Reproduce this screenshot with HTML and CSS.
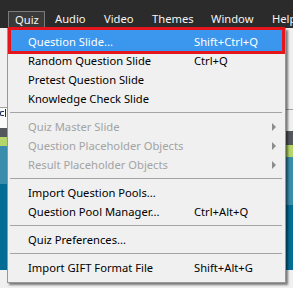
FILE: index.html
```html
<!DOCTYPE html>
<html>
<head>
<meta charset="utf-8">
<link rel="stylesheet" href="styles.css">
</head>
<body>
<div class="screen">
  <div class="menubar">
    <span class="mb-item mb-quiz">Quiz</span>
    <span class="mb-item mb-audio">Audio</span>
    <span class="mb-item mb-video">Video</span>
    <span class="mb-item mb-themes">Themes</span>
    <span class="mb-item mb-window">Window</span>
    <span class="mb-item mb-help">Help</span>
  </div>
  <div class="app">
    <div class="pane pane-left">
      <div class="band b-l1"></div>
      <div class="band b-line"></div>
      <div class="band b-l2"><span class="frag-c"></span><span class="frag-bar"></span></div>
      <div class="band b-l3"></div>
      <div class="band b-l4"></div>
      <div class="band b-l5"></div>
      <div class="band b-l6"></div>
      <div class="band b-l7"></div>
    </div>
    <div class="pane pane-mid"></div>
    <div class="pane pane-right">
      <div class="band b-r1"></div>
      <div class="band b-line"></div>
      <div class="band b-r2"></div>
      <div class="band b-r3"></div>
      <div class="band b-r4"></div>
      <div class="band b-r5"></div>
      <div class="band b-r6"></div>
      <div class="band b-r7"></div>
    </div>
  </div>
  <div class="menu">
    <div class="item hl"><span class="label">Question Slide...</span><span class="key">Shift+Ctrl+Q</span></div>
    <div class="item"><span class="label">Random Question Slide</span><span class="key">Ctrl+Q</span></div>
    <div class="item"><span class="label">Pretest Question Slide</span></div>
    <div class="item"><span class="label">Knowledge Check Slide</span></div>
    <div class="sep"></div>
    <div class="item disabled"><span class="label">Quiz Master Slide</span><span class="arrow"></span></div>
    <div class="item disabled"><span class="label">Question Placeholder Objects</span><span class="arrow"></span></div>
    <div class="item disabled"><span class="label">Result Placeholder Objects</span><span class="arrow"></span></div>
    <div class="sep"></div>
    <div class="item"><span class="label">Import Question Pools...</span></div>
    <div class="item"><span class="label">Question Pool Manager...</span><span class="key">Ctrl+Alt+Q</span></div>
    <div class="sep"></div>
    <div class="item"><span class="label">Quiz Preferences...</span></div>
    <div class="sep"></div>
    <div class="item"><span class="label">Import GIFT Format File</span><span class="key">Shift+Alt+G</span></div>
    <div class="redbox"></div>
  </div>
</div>
</body>
</html>
```

FILE: styles.css
```css
* { box-sizing: border-box; }
html, body { margin: 0; padding: 0; }
body {
  font-family: "Noto Sans", "Open Sans", sans-serif;
  font-size: 11.2px;
  background: #f0f0f0;
}
.screen {
  position: relative;
  width: 293px;
  height: 288px;
  overflow: hidden;
  background: #f0f0f0;
}
.menubar {
  height: 28px;
  background: #2b2b2b;
  display: flex;
  align-items: flex-end;
  padding-left: 8px;
  color: #f4f4f4;
}
.mb-item {
  height: 17px;
  line-height: 16px;
  padding-left: 7px;
  white-space: nowrap;
  flex: none;
}
.mb-quiz {
  width: 37px;
  margin-right: 3px;
  border: 1px solid #7a7a7a;
  border-bottom: none;
  background: #3a3a3a;
  padding-left: 6px;
}
.mb-audio { width: 49px; }
.mb-video { width: 48px; }
.mb-themes { width: 59px; }
.mb-window { width: 61px; }
.mb-help { width: 40px; }

.app {
  display: flex;
  height: 260px;
}
.pane { display: flex; flex-direction: column; flex: none; }
.pane-left { width: 7px; }
.pane-mid { width: 279px; background: #f0f0f0; }
.pane-right { width: 7px; }
.band { flex: none; }
.b-line { height: 1px; background: #a0a0a0; }
.b-l1 { height: 79px; background: #f0f0f0; }
.b-l2 { height: 20px; background: #fafafa; position: relative; overflow: hidden; }
.b-l3 { height: 9px; background: #53575c; }
.b-l4 { height: 9px; background: #b4d66a; }
.b-l5 { height: 38px; background: #3b8dac; }
.b-l6 { height: 86px; background: #036d96; }
.b-l7 { height: 18px; background: #f0f0f0; }
.b-r1 { height: 81px; background: #f0f0f0; }
.b-r2 { height: 21px; background: #f0f0f0; }
.b-r3 { height: 14px; background: #53575c; }
.b-r4 { height: 12px; background: #b4d66a; }
.b-r5 { height: 48px; background: #3b8dac; }
.b-r6 { height: 65px; background: #036d96; }
.b-r7 { height: 18px; background: #f0f0f0; }
.frag-c {
  position: absolute;
  left: 0;
  top: 3px;
  width: 4px;
  height: 5px;
  border: 1px solid #1a2a5a;
  border-right: none;
  border-radius: 2px 0 0 2px;
}
.frag-bar {
  position: absolute;
  left: 5px;
  top: 1px;
  width: 1px;
  height: 8px;
  background: #1a2a5a;
}

.menu {
  position: absolute;
  left: 7px;
  top: 28px;
  width: 279px;
  height: 255px;
  border: 1px solid #979797;
  background: #f0f0f0;
  box-shadow: 2px 2px 2px rgba(0, 0, 0, 0.5);
  padding: 3px 0 5px 0;
  display: flex;
  flex-direction: column;
}
.item {
  height: 19px;
  line-height: 19px;
  display: flex;
  align-items: center;
  padding-left: 20px;
  color: #000;
  white-space: nowrap;
  flex: none;
}
.item .label { width: 166px; flex: none; }
.item .key { flex: none; }
.item.disabled { color: #a3a3a3; }
.item.hl {
  background: #3b96ee;
  color: #fff;
  margin-top: -2px;
  height: 21px;
  padding-top: 2px;
}
.arrow {
  margin-left: auto;
  margin-right: 9px;
  width: 0;
  height: 0;
  border-left: 4px solid #8c8c8c;
  border-top: 4px solid transparent;
  border-bottom: 4px solid transparent;
}
.sep {
  height: 9px;
  flex: none;
  margin: 0 3px 0 2px;
  position: relative;
}
.sep::before {
  content: "";
  display: block;
  position: absolute;
  left: 0;
  right: 0;
  top: 4px;
  height: 1px;
  background: #a5a5a5;
}
.redbox {
  position: absolute;
  left: 0;
  top: -2px;
  width: 277px;
  height: 27px;
  border: 3px solid #e5151c;
}
```
